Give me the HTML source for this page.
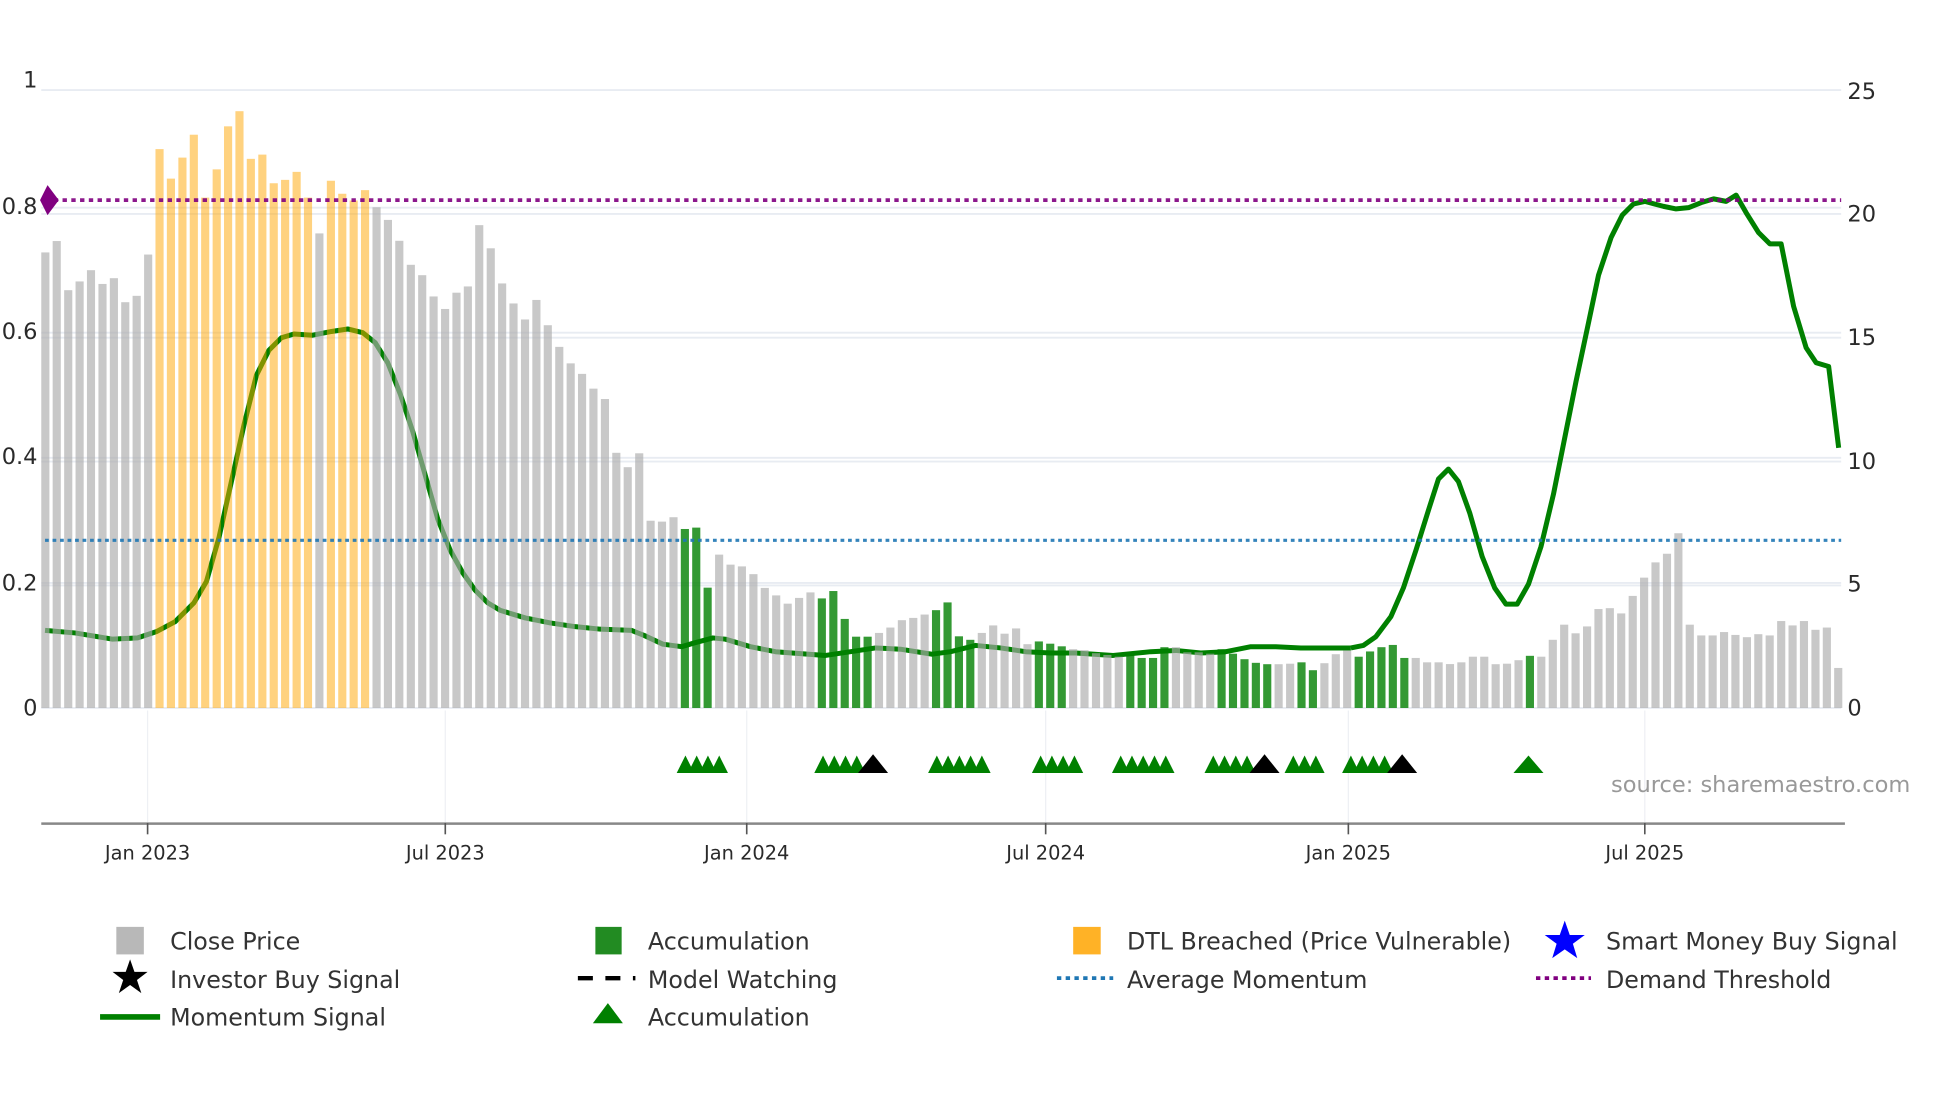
<!DOCTYPE html>
<html><head><meta charset="utf-8"><style>html,body{margin:0;padding:0;background:#fff;}svg{display:block}text{font-family:"DejaVu Sans","Liberation Sans",sans-serif;}</style></head>
<body>
<svg width="1960" height="1102" viewBox="0 0 1567 881" preserveAspectRatio="none" xmlns="http://www.w3.org/2000/svg">
<rect width="1567" height="881" fill="#fff"/>
<g stroke="#e8ecf2" stroke-width="1.5">
<line x1="33" y1="72" x2="1472" y2="72"/>
<line x1="33" y1="171" x2="1472" y2="171"/>
<line x1="33" y1="166" x2="1472" y2="166"/>
<line x1="33" y1="266" x2="1472" y2="266"/>
<line x1="33" y1="270" x2="1472" y2="270"/>
<line x1="33" y1="366" x2="1472" y2="366"/>
<line x1="33" y1="369" x2="1472" y2="369"/>
<line x1="33" y1="466" x2="1472" y2="466"/>
<line x1="33" y1="468" x2="1472" y2="468"/>
<line x1="33" y1="566" x2="1472" y2="566"/>
</g>
<g stroke="#eef0f4" stroke-width="1">
<line x1="118" y1="568" x2="118" y2="658"/><line x1="356" y1="568" x2="356" y2="658"/><line x1="597" y1="568" x2="597" y2="658"/><line x1="836" y1="568" x2="836" y2="658"/><line x1="1078" y1="568" x2="1078" y2="658"/><line x1="1315" y1="568" x2="1315" y2="658"/>
</g>
<polyline fill="none" stroke="#008000" stroke-width="4" stroke-linejoin="round" points="36,504 60,506 90,511 110,510 125,505 140,497 155,482 165,465 175,430 185,385 195,340 205,300 215,280 225,270 235,267 250,268 265,265 278,263 290,266 300,274 310,290 320,315 330,345 340,380 350,415 360,440 370,458 380,472 390,482 400,488 420,494 440,498 460,501 480,503 505,504 515,508 530,515 545,517 555,514 570,510 580,511 600,517 620,521 660,524 680,521 700,518 720,519 745,523 760,521 780,516 800,518 820,521 840,522 860,522 890,524 920,521 940,520 960,522 980,521 1000,517 1020,517 1040,518 1080,518"/>
<g fill="rgba(170,170,170,0.65)">
<rect x="33.0" y="201.8" width="6.5" height="364.2"/>
<rect x="42.1" y="192.7" width="6.5" height="373.3"/>
<rect x="51.3" y="232" width="6.5" height="334"/>
<rect x="60.4" y="225" width="6.5" height="341"/>
<rect x="69.5" y="216" width="6.5" height="350"/>
<rect x="78.7" y="227" width="6.5" height="339"/>
<rect x="87.8" y="222.4" width="6.5" height="343.6"/>
<rect x="96.9" y="241.6" width="6.5" height="324.4"/>
<rect x="106.0" y="236.5" width="6.5" height="329.5"/>
<rect x="115.2" y="203.5" width="6.5" height="362.5"/>
<rect x="252.1" y="186.6" width="6.5" height="379.4"/>
<rect x="297.8" y="165.7" width="6.5" height="400.3"/>
<rect x="306.9" y="175.8" width="6.5" height="390.2"/>
<rect x="316.0" y="192.5" width="6.5" height="373.5"/>
<rect x="325.2" y="211.7" width="6.5" height="354.3"/>
<rect x="334.3" y="220" width="6.5" height="346"/>
<rect x="343.4" y="237" width="6.5" height="329"/>
<rect x="352.6" y="247" width="6.5" height="319"/>
<rect x="361.7" y="234" width="6.5" height="332"/>
<rect x="370.8" y="229" width="6.5" height="337"/>
<rect x="379.9" y="180" width="6.5" height="386"/>
<rect x="389.1" y="198.5" width="6.5" height="367.5"/>
<rect x="398.2" y="226.6" width="6.5" height="339.4"/>
<rect x="407.3" y="242.6" width="6.5" height="323.4"/>
<rect x="416.5" y="255.4" width="6.5" height="310.6"/>
<rect x="425.6" y="239.8" width="6.5" height="326.2"/>
<rect x="434.7" y="260" width="6.5" height="306"/>
<rect x="443.9" y="277.3" width="6.5" height="288.7"/>
<rect x="453.0" y="290.5" width="6.5" height="275.5"/>
<rect x="462.1" y="298.9" width="6.5" height="267.1"/>
<rect x="471.2" y="310.7" width="6.5" height="255.3"/>
<rect x="480.4" y="319" width="6.5" height="247"/>
<rect x="489.5" y="362" width="6.5" height="204"/>
<rect x="498.6" y="373.5" width="6.5" height="192.5"/>
<rect x="507.8" y="362.4" width="6.5" height="203.6"/>
<rect x="516.9" y="416.3" width="6.5" height="149.7"/>
<rect x="526.0" y="417" width="6.5" height="149"/>
<rect x="535.2" y="413.5" width="6.5" height="152.5"/>
<rect x="571.7" y="443.4" width="6.5" height="122.6"/>
<rect x="580.8" y="451.4" width="6.5" height="114.6"/>
<rect x="589.9" y="452.8" width="6.5" height="113.2"/>
<rect x="599.1" y="459" width="6.5" height="107"/>
<rect x="608.2" y="470" width="6.5" height="96"/>
<rect x="617.3" y="476" width="6.5" height="90"/>
<rect x="626.5" y="482.6" width="6.5" height="83.4"/>
<rect x="635.6" y="478" width="6.5" height="88"/>
<rect x="644.7" y="473.6" width="6.5" height="92.4"/>
<rect x="699.5" y="506" width="6.5" height="60"/>
<rect x="708.6" y="501.7" width="6.5" height="64.3"/>
<rect x="717.8" y="495.8" width="6.5" height="70.2"/>
<rect x="726.9" y="494" width="6.5" height="72"/>
<rect x="736.0" y="491.3" width="6.5" height="74.7"/>
<rect x="781.7" y="506" width="6.5" height="60"/>
<rect x="790.8" y="500" width="6.5" height="66"/>
<rect x="799.9" y="506.6" width="6.5" height="59.4"/>
<rect x="809.1" y="502.4" width="6.5" height="63.6"/>
<rect x="818.2" y="515" width="6.5" height="51"/>
<rect x="854.7" y="519" width="6.5" height="47"/>
<rect x="863.8" y="519.8" width="6.5" height="46.2"/>
<rect x="873.0" y="522.2" width="6.5" height="43.8"/>
<rect x="882.1" y="523.6" width="6.5" height="42.4"/>
<rect x="891.2" y="525" width="6.5" height="41"/>
<rect x="936.9" y="517.4" width="6.5" height="48.6"/>
<rect x="946.0" y="521.5" width="6.5" height="44.5"/>
<rect x="955.1" y="521.5" width="6.5" height="44.5"/>
<rect x="964.3" y="522.6" width="6.5" height="43.4"/>
<rect x="1019.0" y="531" width="6.5" height="35"/>
<rect x="1028.2" y="530.6" width="6.5" height="35.4"/>
<rect x="1055.6" y="530.2" width="6.5" height="35.8"/>
<rect x="1064.7" y="523" width="6.5" height="43"/>
<rect x="1073.8" y="520" width="6.5" height="46"/>
<rect x="1128.6" y="526" width="6.5" height="40"/>
<rect x="1137.7" y="529.5" width="6.5" height="36.5"/>
<rect x="1146.9" y="529.5" width="6.5" height="36.5"/>
<rect x="1156.0" y="530.9" width="6.5" height="35.1"/>
<rect x="1165.1" y="529.5" width="6.5" height="36.5"/>
<rect x="1174.3" y="525" width="6.5" height="41"/>
<rect x="1183.4" y="525" width="6.5" height="41"/>
<rect x="1192.5" y="531" width="6.5" height="35"/>
<rect x="1201.6" y="530.6" width="6.5" height="35.4"/>
<rect x="1210.8" y="527.8" width="6.5" height="38.2"/>
<rect x="1229.0" y="525" width="6.5" height="41"/>
<rect x="1238.2" y="511.5" width="6.5" height="54.5"/>
<rect x="1247.3" y="499.4" width="6.5" height="66.6"/>
<rect x="1256.4" y="506.3" width="6.5" height="59.7"/>
<rect x="1265.6" y="500.8" width="6.5" height="65.2"/>
<rect x="1274.7" y="486.9" width="6.5" height="79.1"/>
<rect x="1283.8" y="486.2" width="6.5" height="79.8"/>
<rect x="1292.9" y="490.4" width="6.5" height="75.6"/>
<rect x="1302.1" y="476.4" width="6.5" height="89.6"/>
<rect x="1311.2" y="461.8" width="6.5" height="104.2"/>
<rect x="1320.3" y="449.6" width="6.5" height="116.4"/>
<rect x="1329.5" y="442.7" width="6.5" height="123.3"/>
<rect x="1338.6" y="426.3" width="6.5" height="139.7"/>
<rect x="1347.7" y="499.4" width="6.5" height="66.6"/>
<rect x="1356.9" y="508" width="6.5" height="58"/>
<rect x="1366.0" y="508" width="6.5" height="58"/>
<rect x="1375.1" y="505.3" width="6.5" height="60.7"/>
<rect x="1384.2" y="507.6" width="6.5" height="58.4"/>
<rect x="1393.4" y="509.4" width="6.5" height="56.6"/>
<rect x="1402.5" y="507" width="6.5" height="59"/>
<rect x="1411.6" y="508" width="6.5" height="58"/>
<rect x="1420.8" y="496.5" width="6.5" height="69.5"/>
<rect x="1429.9" y="500" width="6.5" height="66"/>
<rect x="1439.0" y="496.5" width="6.5" height="69.5"/>
<rect x="1448.2" y="503.5" width="6.5" height="62.5"/>
<rect x="1457.3" y="501.7" width="6.5" height="64.3"/>
<rect x="1466.4" y="534" width="6.5" height="32"/>
</g>
<g fill="rgba(255,165,0,0.5)">
<rect x="124.3" y="119.2" width="6.5" height="446.8"/>
<rect x="133.4" y="142.8" width="6.5" height="423.2"/>
<rect x="142.6" y="126" width="6.5" height="440"/>
<rect x="151.7" y="107.7" width="6.5" height="458.3"/>
<rect x="160.8" y="158" width="6.5" height="408"/>
<rect x="170.0" y="135.4" width="6.5" height="430.6"/>
<rect x="179.1" y="101" width="6.5" height="465"/>
<rect x="188.2" y="88.9" width="6.5" height="477.1"/>
<rect x="197.3" y="127" width="6.5" height="439"/>
<rect x="206.5" y="123.6" width="6.5" height="442.4"/>
<rect x="215.6" y="146.5" width="6.5" height="419.5"/>
<rect x="224.7" y="143.8" width="6.5" height="422.2"/>
<rect x="233.9" y="137.4" width="6.5" height="428.6"/>
<rect x="243.0" y="158" width="6.5" height="408"/>
<rect x="261.3" y="144.5" width="6.5" height="421.5"/>
<rect x="270.4" y="154.9" width="6.5" height="411.1"/>
<rect x="279.5" y="160.3" width="6.5" height="405.7"/>
<rect x="288.6" y="152" width="6.5" height="414"/>
</g>
<g fill="rgba(0,128,0,0.8)">
<rect x="544.3" y="422.9" width="6.5" height="143.1"/>
<rect x="553.4" y="421.8" width="6.5" height="144.2"/>
<rect x="562.5" y="469.8" width="6.5" height="96.2"/>
<rect x="653.8" y="478.4" width="6.5" height="87.6"/>
<rect x="663.0" y="472.5" width="6.5" height="93.5"/>
<rect x="672.1" y="494.8" width="6.5" height="71.2"/>
<rect x="681.2" y="509" width="6.5" height="57"/>
<rect x="690.4" y="509" width="6.5" height="57"/>
<rect x="745.1" y="487.8" width="6.5" height="78.2"/>
<rect x="754.3" y="481.6" width="6.5" height="84.4"/>
<rect x="763.4" y="508.7" width="6.5" height="57.3"/>
<rect x="772.5" y="511.5" width="6.5" height="54.5"/>
<rect x="827.3" y="512.8" width="6.5" height="53.2"/>
<rect x="836.4" y="514.6" width="6.5" height="51.4"/>
<rect x="845.6" y="516.7" width="6.5" height="49.3"/>
<rect x="900.4" y="523.3" width="6.5" height="42.7"/>
<rect x="909.5" y="526" width="6.5" height="40"/>
<rect x="918.6" y="526" width="6.5" height="40"/>
<rect x="927.7" y="517.4" width="6.5" height="48.6"/>
<rect x="973.4" y="519" width="6.5" height="47"/>
<rect x="982.5" y="522.6" width="6.5" height="43.4"/>
<rect x="991.7" y="527" width="6.5" height="39"/>
<rect x="1000.8" y="529.9" width="6.5" height="36.1"/>
<rect x="1009.9" y="531" width="6.5" height="35"/>
<rect x="1037.3" y="529.5" width="6.5" height="36.5"/>
<rect x="1046.4" y="535.8" width="6.5" height="30.2"/>
<rect x="1083.0" y="525" width="6.5" height="41"/>
<rect x="1092.1" y="520.8" width="6.5" height="45.2"/>
<rect x="1101.2" y="517.4" width="6.5" height="48.6"/>
<rect x="1110.3" y="515.6" width="6.5" height="50.4"/>
<rect x="1119.5" y="526" width="6.5" height="40"/>
<rect x="1219.9" y="524.3" width="6.5" height="41.7"/>
</g>
<polyline fill="none" stroke="#008000" stroke-width="4" stroke-linejoin="round" points="1080,518 1090,516 1100,509 1112,493 1122,470 1132,440 1142,408 1150,383 1158,375 1166,385 1175,410 1185,445 1195,470 1204,483 1213,483 1222,467 1232,437 1242,395 1252,345 1260,305 1270,258 1278,220 1288,190 1297,172 1306,163 1315,161 1330,165 1340,167 1350,166 1360,162 1370,159 1380,161 1388,156 1396,170 1406,186 1415,195 1424,195 1434,245 1444,278 1452,290 1462,293 1470,358"/>
<line x1="36" y1="160" x2="1472" y2="160" stroke="#800080" stroke-width="3" stroke-dasharray="3.5,3.5" opacity="0.9"/>
<line x1="36" y1="432" x2="1472" y2="432" stroke="#1f77b4" stroke-width="2.5" stroke-dasharray="3,3" opacity="0.9"/>
<polygon points="38,148 47,160 38,172 32,160" fill="#800080"/>
<g fill="#008000">
<polygon points="541,618 548,604 555,618"/><polygon points="550,618 557,604 564,618"/><polygon points="559,618 566,604 573,618"/><polygon points="568,618 575,604 582,618"/>
<polygon points="651,618 658,604 665,618"/><polygon points="660,618 667,604 674,618"/><polygon points="669,618 676,604 683,618"/><polygon points="678,618 685,604 692,618"/>
<polygon points="742,618 749,604 756,618"/><polygon points="751,618 758,604 765,618"/><polygon points="760,618 767,604 774,618"/><polygon points="769,618 776,604 783,618"/><polygon points="778,618 785,604 792,618"/>
<polygon points="825,618 832,604 839,618"/><polygon points="834,618 841,604 848,618"/><polygon points="843,618 850,604 857,618"/><polygon points="852,618 859,604 866,618"/>
<polygon points="889,618 896,604 903,618"/><polygon points="898,618 905,604 912,618"/><polygon points="907,618 914,604 921,618"/><polygon points="916,618 923,604 930,618"/><polygon points="925,618 932,604 939,618"/>
<polygon points="963,618 970,604 977,618"/><polygon points="972,618 979,604 986,618"/><polygon points="981,618 988,604 995,618"/><polygon points="990,618 997,604 1004,618"/>
<polygon points="1027,618 1034,604 1041,618"/><polygon points="1036,618 1043,604 1050,618"/><polygon points="1045,618 1052,604 1059,618"/>
<polygon points="1073,618 1080,604 1087,618"/><polygon points="1082,618 1089,604 1096,618"/><polygon points="1091,618 1098,604 1105,618"/><polygon points="1100,618 1107,604 1114,618"/>
<polygon points="1210,618 1222,604 1234,618"/>
</g>
<g fill="#000">
<polygon points="686,618 698,603 710,618"/><polygon points="999,618 1011,603 1023,618"/><polygon points="1109,618 1121,603 1133,618"/>
</g>
<line x1="33" y1="658.5" x2="1475" y2="658.5" stroke="#888" stroke-width="2"/>
<g stroke="#555" stroke-width="1.3">
<line x1="118" y1="658" x2="118" y2="667"/><line x1="356" y1="658" x2="356" y2="667"/><line x1="597" y1="658" x2="597" y2="667"/><line x1="836" y1="658" x2="836" y2="667"/><line x1="1078" y1="658" x2="1078" y2="667"/><line x1="1315" y1="658" x2="1315" y2="667"/>
</g>
<g font-size="15.5" fill="#2a2a2a" text-anchor="middle">
<text x="118" y="687">Jan 2023</text><text x="356" y="687">Jul 2023</text><text x="597" y="687">Jan 2024</text><text x="836" y="687">Jul 2024</text><text x="1078" y="687">Jan 2025</text><text x="1315" y="687">Jul 2025</text>
</g>
<g font-size="18" fill="#2a2a2a" text-anchor="end">
<text x="30" y="70">1</text><text x="30" y="171">0.8</text><text x="30" y="271">0.6</text><text x="30" y="371">0.4</text><text x="30" y="472">0.2</text><text x="30" y="572">0</text>
</g>
<g font-size="18" fill="#2a2a2a">
<text x="1477" y="79">25</text><text x="1477" y="177">20</text><text x="1477" y="276">15</text><text x="1477" y="375">10</text><text x="1477" y="473">5</text><text x="1477" y="572">0</text>
</g>
<text x="1288" y="633" font-size="18" fill="#999">source: sharemaestro.com</text>
<g font-size="19" fill="#333">
<rect x="93" y="741" width="22" height="22" fill="#b8b8b8"/><text x="136" y="759">Close Price</text>
<polygon points="104,767 107.5,777 118,777 109.5,783.5 113,794 104,787.5 95,794 98.5,783.5 90,777 100.5,777" fill="#000"/><text x="136" y="790">Investor Buy Signal</text>
<line x1="80" y1="813" x2="128" y2="813" stroke="#008000" stroke-width="4.5"/><text x="136" y="820">Momentum Signal</text>
<rect x="476" y="741" width="21" height="22" fill="#228b22"/><text x="518" y="759">Accumulation</text>
<line x1="462" y1="782" x2="508" y2="782" stroke="#000" stroke-width="3.5" stroke-dasharray="12,10"/><text x="518" y="790">Model Watching</text>
<polygon points="474,818 486,802 498,818" fill="#008000"/><text x="518" y="820">Accumulation</text>
<rect x="858" y="741" width="22" height="22" fill="#ffa500" opacity="0.85"/><text x="901" y="759">DTL Breached (Price Vulnerable)</text>
<line x1="845" y1="782" x2="890" y2="782" stroke="#1f77b4" stroke-width="3" stroke-dasharray="3.5,3.5"/><text x="901" y="790">Average Momentum</text>
<polygon points="1251,736 1255,747.5 1267,747.5 1257.5,754.5 1261,766 1251,759 1241,766 1244.5,754.5 1235,747.5 1247,747.5" fill="#0000ff"/><text x="1284" y="759">Smart Money Buy Signal</text>
<line x1="1228" y1="782" x2="1272" y2="782" stroke="#800080" stroke-width="3" stroke-dasharray="3.5,3.5"/><text x="1284" y="790">Demand Threshold</text>
</g>
</svg>
</body></html>
